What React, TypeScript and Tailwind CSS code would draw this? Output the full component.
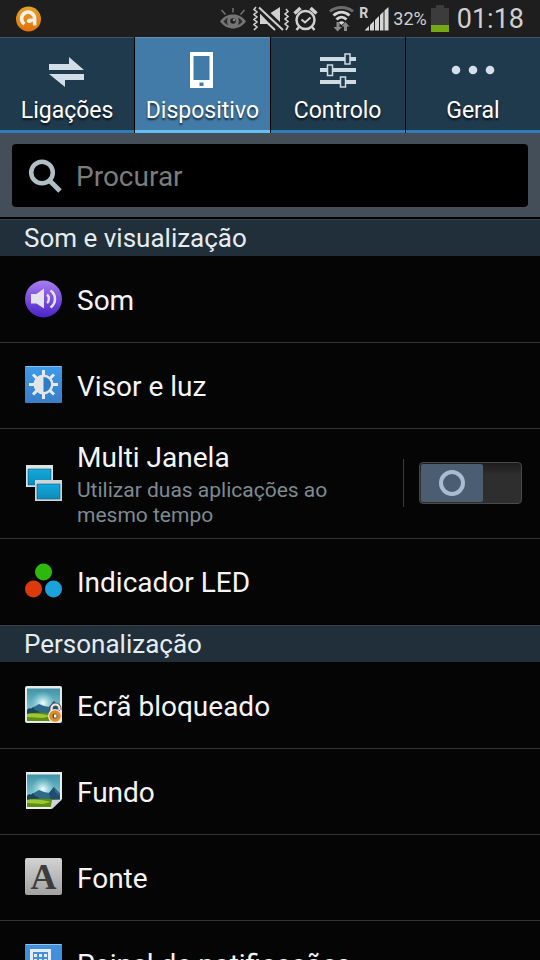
import React, { useState } from "react";
import clsx from "clsx";

/* ---------- status bar icons ---------- */

function AvastIcon() {
  return (
    <svg width="26" height="26" viewBox="0 0 26 26" aria-hidden="true">
      <defs>
        <linearGradient id="avast" x1="0" y1="0" x2="0" y2="1">
          <stop offset="0" stopColor="#e0a428" />
          <stop offset="1" stopColor="#e2700c" />
        </linearGradient>
      </defs>
      <circle cx="12.500" cy="13" r="12.500" fill="url(#avast)" />
      <path
        d="M8.500 18A6.500 6.500 0 1 1 18.600 12.500V19.500"
        fill="none"
        stroke="#f4efe6"
        strokeWidth="3.600"
      />
      <path d="M18.500 13.500c-2-1.200-6.500-1.500-7.500.8-.8 2 1.200 3.200 3 2.600 2-.6 3-2 4.500-2z" fill="#f4efe6" />
    </svg>
  );
}

function EyeIcon() {
  return (
    <svg width="28" height="24" viewBox="0 0 28 24" aria-hidden="true">
      <path d="M1 14.500C5 9 9.500 7.500 14 7.500s9 1.500 13 7c-4 5-8.500 7-13 7s-9-2-13-7z" fill="#747474" />
      <path
        d="M4.500 14.500c1.500-2 3-3 4.500-3.700-1.200 2.400-1.200 5 .2 7.300-1.700-.6-3.300-1.800-4.700-3.600zM23.500 14.500c-1.500-2-3-3-4.500-3.700 1.200 2.400 1.200 5-.2 7.300 1.700-.6 3.300-1.800 4.700-3.600z"
        fill="#2c2c2c"
      />
      <circle cx="14" cy="14" r="2.800" fill="#222" />
      <circle cx="15" cy="13" r="1.200" fill="#8a8a8a" />
      <path d="M14 1v4.500M6.500 7.500 2.500 3M21.500 7.500l4-4.500" stroke="#747474" strokeWidth="1.500" />
    </svg>
  );
}

function MuteVibrateIcon() {
  return (
    <svg width="36" height="26" viewBox="0 0 36 26" fill="none" aria-hidden="true">
      <path
        d="M3 1 1 3.500 4 6 1 8.500 4 11 1 13.500 4 16 1 18.500 4 21 1 24M33 3l2 2.500L32 8l3 2.500-3 2.500 3 2.500-3 2.500 3 2.500-2 3.500"
        stroke="#d0d0d0"
        strokeWidth="1.600"
      />
      <path d="M7 7.500V18h10z" fill="#d0d0d0" />
      <path d="M17.500 7 27 1v15z" fill="#d0d0d0" />
      <path d="m6 1.500 24 22.500M15 17.500l7 6.500" stroke="#d0d0d0" strokeWidth="2" />
    </svg>
  );
}

function AlarmIcon() {
  return (
    <svg width="25" height="26" viewBox="0 0 25 26" fill="none" stroke="#d0d0d0" aria-hidden="true">
      <circle cx="12.500" cy="14" r="9" strokeWidth="2.500" />
      <path d="m8.500 13.500 3.500 3 5.500-5" strokeWidth="2" />
      <path d="m1.500 7.500 6-5.500M23.500 7.500l-6-5.500" strokeWidth="3.500" />
      <path d="m6 21-2.500 3M19 21l2.500 3" strokeWidth="2.500" />
    </svg>
  );
}

function WifiIcon() {
  return (
    <svg width="27" height="27" viewBox="0 0 27 27" fill="none" aria-hidden="true">
      <path d="M2 6.500C8 1 19 1 25 6.500" stroke="#6c6c6c" strokeWidth="3" />
      <path d="M5.500 10.500c5-4.500 11-4.500 16 0M8.500 14.500c3-3 7-3 10 0" stroke="#d6d6d6" strokeWidth="3" />
      <path d="M10.500 17.500c2-1.800 4-1.800 6 0l-3 2.500z" fill="#d6d6d6" />
      <path d="M11.500 17v5H14l-4.500 4.500L5.500 22h3v-5zM16 26v-4.500h-2.500l4-4.500 4 4.500H19V26z" fill="#8a8a8a" />
    </svg>
  );
}

function SignalIcon() {
  return (
    <svg width="25" height="24" viewBox="0 0 25 24" fill="#d6d6d6" aria-hidden="true">
      <path d="M1 23.500V23l4-4v4.500zM6 23.500v-5.500l4-4v9.500zM11 23.500V13l4-4v14.500zM16 23.500V8l3.500-3.500v19zM20.500 23.500v-20L24.500 0v23.500z" />
    </svg>
  );
}

function BatteryIcon() {
  return (
    <svg width="18" height="27" viewBox="0 0 18 27" aria-hidden="true">
      <path d="M5 0h8v3h5v24H0V3h5z" fill="#3c3c3c" />
      <path d="M0 20h18v7H0z" fill="#74a814" />
    </svg>
  );
}

/* ---------- tab icons ---------- */

function ConnectionsIcon() {
  return (
    <svg width="38" height="36" viewBox="0 0 38 36" aria-hidden="true">
      <path d="M1 12h20V5l15 13H1zM36 22v6H17v7L1 22z" fill="#d3dde6" />
    </svg>
  );
}

function DeviceIcon() {
  return (
    <svg width="36" height="36" viewBox="0 0 36 36" aria-hidden="true">
      <path fillRule="evenodd" d="M6 0h23v36H6zM9.500 4v24h16V4zM15.500 30.500v3.500h4v-3.500z" fill="#fff" />
    </svg>
  );
}

function ControlsIcon() {
  return (
    <svg width="36" height="36" viewBox="0 0 36 36" aria-hidden="true">
      <path d="M0 5h36v4H0zM0 16h36v4H0zM0 28h36v4H0z" fill="#cfdae3" />
      <g fill="#1f394d" stroke="#cfdae3" strokeWidth="1.500">
        <path d="M25 2h5v10h-5zM7.500 13h5v10.500h-5zM20.500 25h5v10h-5z" />
      </g>
    </svg>
  );
}

function MoreIcon() {
  return (
    <svg width="44" height="36" viewBox="0 0 44 36" fill="#d3e0ea" aria-hidden="true">
      <circle cx="5" cy="18" r="4.300" />
      <circle cx="22" cy="18" r="4.300" />
      <circle cx="39" cy="18" r="4.300" />
    </svg>
  );
}

/* ---------- list icons ---------- */

function IconBox({ children }: { children: React.ReactNode }) {
  return (
    <svg width="38" height="38" viewBox="0 0 38 38" className="shrink-0" aria-hidden="true">
      {children}
    </svg>
  );
}

function SoundIcon() {
  return (
    <IconBox>
      <defs>
        <linearGradient id="sound" x1="0" y1="0" x2="0" y2="1">
          <stop offset="0" stopColor="#a87df0" />
          <stop offset="1" stopColor="#4a22c8" />
        </linearGradient>
      </defs>
      <circle cx="19.500" cy="19" r="18.500" fill="url(#sound)" />
      <path d="M7 14h5.500L20 8.500v20L12.500 23.500H7z" fill="#e6e2ee" />
      <path
        d="M23 14.500c2.500 2 2.500 6.500 0 8.500M26.500 10.500c6 4.500 6 12.500 0 17"
        fill="none"
        stroke="#e6e2ee"
        strokeWidth="2.500"
      />
    </IconBox>
  );
}

function BrightnessIcon() {
  return (
    <IconBox>
      <defs>
        <linearGradient id="bright" x1="0" y1="0" x2="0" y2="1">
          <stop offset="0" stopColor="#3f9be8" />
          <stop offset="1" stopColor="#3a7ec8" />
        </linearGradient>
      </defs>
      <rect x="1" y="0" width="37" height="37" rx="1" fill="url(#bright)" />
      <path d="M1.500.5h36" stroke="#7fc0f4" />
      <path
        d="M19.500 4v6M19.500 27v6M5 18.500h6M28 18.500h6M9 8.500l4 4M26 24.500l4 4M30 8.500l-4 4M13 24.500l-4 4"
        stroke="#e6ebee"
        strokeWidth="3"
      />
      <circle cx="19.500" cy="18.500" r="10" fill="#e2e6e8" />
      <path d="M19.500 11a7.500 7.500 0 0 1 0 15z" fill="#2e7cc4" />
    </IconBox>
  );
}

function MultiWindowIcon() {
  return (
    <IconBox>
      <defs>
        <linearGradient id="win" x1="0" y1="0" x2="0" y2="1">
          <stop offset="0" stopColor="#12a8dc" />
          <stop offset="1" stopColor="#0e8cba" />
        </linearGradient>
      </defs>
      <path d="M2 1h27v22H2z" fill="#dfe3e4" />
      <path d="M4 5h23v16H4z" fill="url(#win)" stroke="#0b5f80" strokeWidth=".6" />
      <path d="M11 16h27v21H11z" fill="#cfd6d8" />
      <path d="M13 20h23v15H13z" fill="url(#win)" stroke="#0b5f80" strokeWidth=".6" />
    </IconBox>
  );
}

function LedIcon() {
  return (
    <IconBox>
      <circle cx="19.500" cy="10" r="8.500" fill="#2cb80c" />
      <circle cx="9.500" cy="27" r="8.500" fill="#dc3a0a" />
      <circle cx="29.500" cy="27" r="8.500" fill="#1ba2da" />
    </IconBox>
  );
}

function Landscape() {
  return (
    <>
      <defs>
        <linearGradient id="sky" x1="0" y1="0" x2="0" y2="1">
          <stop offset="0" stopColor="#3f93a6" />
          <stop offset="1" stopColor="#8ad0da" />
        </linearGradient>
        <radialGradient id="glow" cx="19" cy="17" r="12" gradientUnits="userSpaceOnUse">
          <stop offset="0" stopColor="#f4ffff" />
          <stop offset="1" stopColor="#9adbe2" stopOpacity="0" />
        </radialGradient>
      </defs>
      <path d="M3 2.500h33v26H3z" fill="url(#sky)" />
      <path d="M3 2.500h33v26H3z" fill="url(#glow)" />
      <path d="m3 24 5-2 7-4 5 2 5 1 5-6 6 6v9H3z" fill="#2f6888" />
      <path d="m25 21 5-6 1 5 5 4v5h-9z" fill="#1e4e70" />
      <path d="m3 24 2-2 2 1 2-2 2 3 3 1 4 4H3z" fill="#1a4558" />
      <path d="M3 28c10-2 20-1 33 0v7H3z" fill="#5f8c14" />
      <path d="M3 28c9-1 17 0 24 2l-8 2-16-1z" fill="#9cc832" />
    </>
  );
}

function LockScreenIcon() {
  return (
    <IconBox>
      <rect x="1" y="0" width="37" height="37" rx="2" fill="#e4e9ea" />
      <Landscape />
      <path d="M27.500 27v-4.500a4 4 0 0 1 8 0V24" fill="none" stroke="#555" strokeWidth="4" />
      <circle cx="31" cy="30" r="7" fill="#ece4d8" />
      <path d="M27.500 27v-4.500a4 4 0 0 1 8 0V24" fill="none" stroke="#ececec" strokeWidth="2.200" />
      <circle cx="31" cy="30" r="4.200" fill="#5a5348" stroke="#e08c20" strokeWidth="3.200" />
      <path d="M30 28.500h2.500v3H30z" fill="#f4f4f4" />
    </IconBox>
  );
}

function WallpaperIcon() {
  return (
    <IconBox>
      <path d="M2 0h36v28l-9 9H2z" fill="#eceff0" />
      <Landscape />
      <path d="M38 27v10H27z" fill="#050505" />
      <path d="M38 27.500 28 37l-1.500-1 1.500-8z" fill="#cfd3d4" />
    </IconBox>
  );
}

function FontIcon() {
  return (
    <span className="flex h-[38px] w-[38px] shrink-0 items-start justify-end" aria-hidden="true">
      <span className="flex h-[37px] w-[37px] items-center justify-center rounded-xs bg-linear-to-b from-[#d2d2d2] to-[#a2a2a2] font-['Liberation_Serif',serif] text-4xl font-bold text-[#3c3c3c]">
        A
      </span>
    </span>
  );
}

function PanelIcon() {
  return (
    <IconBox>
      <rect x="1" y="0" width="37" height="37" rx="1" fill="#4290dc" />
      <path d="M1.500.5h36" stroke="#8cc4f4" />
      <path d="M7.500 34V6.500h18V20" fill="none" stroke="#e4ecf4" strokeWidth="3" />
      <path d="M10 10h3v3h-3zM15 10h3v3h-3zM20 10h3v3h-3zM10 15h3v3h-3zM15 15h3v3h-3zM20 15h3v3h-3z" fill="#e4ecf4" />
    </IconBox>
  );
}

/* ---------- layout ---------- */

const tabs = [
  { id: "ligacoes", label: "Ligações", icon: <ConnectionsIcon /> },
  { id: "dispositivo", label: "Dispositivo", icon: <DeviceIcon /> },
  { id: "controlo", label: "Controlo", icon: <ControlsIcon /> },
  { id: "geral", label: "Geral", icon: <MoreIcon /> },
];

function StatusBar() {
  return (
    <header className="flex h-[37px] shrink-0 items-center bg-[#1e1e1e] px-4 text-[#d0d0d0]">
      <AvastIcon />
      <div className="ml-auto flex items-center gap-1">
        <EyeIcon />
        <span className="ml-0.5">
          <MuteVibrateIcon />
        </span>
        <AlarmIcon />
        <span className="ml-1.5">
          <WifiIcon />
        </span>
        <span className="flex items-center">
          <span className="-mr-1 self-start text-sm leading-3 font-bold">R</span>
          <SignalIcon />
        </span>
        <span className="text-lg">32%</span>
        <BatteryIcon />
        <span className="ml-1 text-[27px] leading-9">01:18</span>
      </div>
    </header>
  );
}

function SectionTitle({ children }: { children: React.ReactNode }) {
  return (
    <h2 className="h-[38px] border-t border-black bg-[#212f3a] px-6 text-[26px] leading-[38px] text-[#e6edf2] inset-shadow-[0_1px_0_#33424c]">
      {children}
    </h2>
  );
}

function Row({ icon, title }: { icon: React.ReactNode; title: string }) {
  return (
    <li className="h-[86px] not-first:inset-shadow-[0_1px_0_#343434]">
      <a href="#" className="flex h-full items-center gap-[15px] px-6">
        {icon}
        <span className="pt-1 text-[28px] leading-9 whitespace-nowrap">{title}</span>
      </a>
    </li>
  );
}

function Toggle({ checked, onChange }: { checked: boolean; onChange: (v: boolean) => void }) {
  return (
    <label className="relative flex h-[42px] w-[103px] cursor-pointer rounded-sm border border-[#4a4a4a] bg-linear-to-b from-[#1c1c1c] to-[#2e2e2e] to-30% p-px">
      <input
        type="checkbox"
        className="sr-only"
        aria-label="Multi Janela"
        checked={checked}
        onChange={(e) => onChange(e.target.checked)}
      />
      <span
        className={clsx(
          "flex h-full w-[62px] items-center justify-center rounded-xs",
          checked ? "ml-auto bg-[#3f7fb4]" : "bg-[#4b5d70]"
        )}
      >
        <span className="h-[26px] w-[26px] rounded-full border-4 border-[#a9bdd2]" />
      </span>
    </label>
  );
}

export default function App() {
  const [activeTab, setActiveTab] = useState("dispositivo");
  const [multiWindow, setMultiWindow] = useState(false);

  return (
    <div className="flex h-dvh flex-col overflow-hidden bg-[#050505] font-[Roboto,sans-serif] text-[#f5f5f5]">
      <StatusBar />

      <nav className="grid shrink-0 grid-cols-4 gap-px bg-black">
        {tabs.map((tab) => (
          <button
            key={tab.id}
            type="button"
            onClick={() => setActiveTab(tab.id)}
            className={clsx(
              "flex h-24 flex-col items-center border-t border-b-3 pt-[14px] text-white",
              activeTab === tab.id
                ? "border-t-[#6590b0] border-b-[#62c0f2] bg-[#427ba8]"
                : "border-t-[#405668] border-b-[#2f7cba] bg-[#1f394d]"
            )}
          >
            {tab.icon}
            <span className="mt-1 text-[23px] leading-[38px] text-shadow-[0_2px_2px_#000a]">{tab.label}</span>
          </button>
        ))}
      </nav>

      {/* search */}
      <div className="shrink-0 bg-[#434e58] px-3 pt-[11px] pb-[10px]">
        <label className="flex h-[63px] items-center gap-[14px] rounded-sm bg-black px-4">
          <svg width="34" height="34" viewBox="0 0 34 34" fill="none" stroke="#b0bec6" aria-hidden="true">
            <circle cx="14" cy="13.500" r="10.800" strokeWidth="4.500" />
            <path d="m21 21 11 11" strokeWidth="5" />
          </svg>
          <input
            type="text"
            placeholder="Procurar"
            aria-label="Procurar"
            className="min-w-0 flex-1 bg-transparent pt-0.5 text-[28px] leading-9 outline-none placeholder:text-[#7c7c7c]"
          />
        </label>
      </div>

      <main className="min-h-0 flex-1 overflow-y-auto border-t border-black [scrollbar-width:none]">
        <SectionTitle>Som e visualização</SectionTitle>
        <ul>
          <Row icon={<SoundIcon />} title="Som" />
          <Row icon={<BrightnessIcon />} title="Visor e luz" />
          <li className="flex h-[110px] items-center pr-[18px] pl-6 inset-shadow-[0_1px_0_#343434]">
            <a href="#" className="flex flex-1 items-center gap-[15px]">
              <MultiWindowIcon />
              <span className="block max-w-[270px] pt-0.5">
                <span className="block text-[28px] leading-9">Multi Janela</span>
                <span className="block pt-0.5 text-[21px] leading-[25px] text-[#7f8a90]">
                  Utilizar duas aplicações ao mesmo tempo
                </span>
              </span>
            </a>
            <span className="mr-[15px] h-12 w-px bg-[#3a3a3a]" />
            <Toggle checked={multiWindow} onChange={setMultiWindow} />
          </li>
          <Row icon={<LedIcon />} title="Indicador LED" />
        </ul>

        <SectionTitle>Personalização</SectionTitle>
        <ul>
          <Row icon={<LockScreenIcon />} title="Ecrã bloqueado" />
          <Row icon={<WallpaperIcon />} title="Fundo" />
          <Row icon={<FontIcon />} title="Fonte" />
          <Row icon={<PanelIcon />} title="Painel de notificações" />
        </ul>
      </main>
    </div>
  );
}
